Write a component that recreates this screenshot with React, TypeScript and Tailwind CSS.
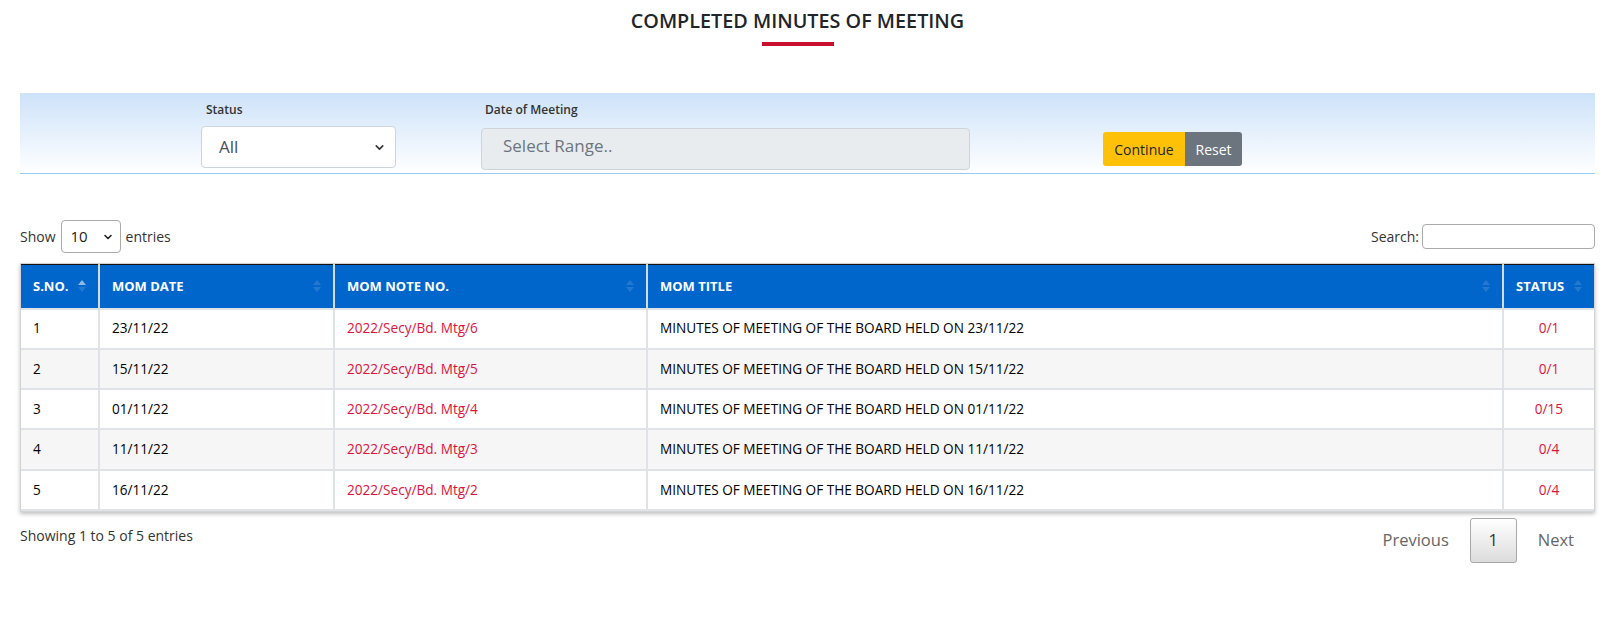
import { ChevronDown } from "lucide-react";

type MomRow = {
  no: number;
  date: string;
  note: string;
  title: string;
  status: string;
};

const rows: MomRow[] = [
  { no: 1, date: "23/11/22", note: "2022/Secy/Bd. Mtg/6", title: "MINUTES OF MEETING OF THE BOARD HELD ON 23/11/22", status: "0/1" },
  { no: 2, date: "15/11/22", note: "2022/Secy/Bd. Mtg/5", title: "MINUTES OF MEETING OF THE BOARD HELD ON 15/11/22", status: "0/1" },
  { no: 3, date: "01/11/22", note: "2022/Secy/Bd. Mtg/4", title: "MINUTES OF MEETING OF THE BOARD HELD ON 01/11/22", status: "0/15" },
  { no: 4, date: "11/11/22", note: "2022/Secy/Bd. Mtg/3", title: "MINUTES OF MEETING OF THE BOARD HELD ON 11/11/22", status: "0/4" },
  { no: 5, date: "16/11/22", note: "2022/Secy/Bd. Mtg/2", title: "MINUTES OF MEETING OF THE BOARD HELD ON 16/11/22", status: "0/4" },
];

const columns = [
  { label: "S.NO.", width: "w-[78px]", asc: true },
  { label: "MOM DATE", width: "w-[235px]" },
  { label: "MOM NOTE NO.", width: "w-[313px]" },
  { label: "MOM TITLE", width: "w-[856px]" },
  { label: "STATUS", width: "w-[91px]" },
];

function SortIcon({ asc }: { asc?: boolean }) {
  return (
    <span className="flex flex-col gap-[2px]">
      <svg width="8" height="5" viewBox="0 0 8 5">
        <path d="M4 0L8 5H0z" fill={asc ? "#8fbbea" : "#2677cf"} />
      </svg>
      <svg width="8" height="5" viewBox="0 0 8 5">
        <path d="M0 0H8L4 5z" fill="#2677cf" />
      </svg>
    </span>
  );
}

export default function App() {
  return (
    <main className="min-h-[617px] bg-white pl-[20px] pr-[12px] font-['Segoe_UI','Open_Sans',sans-serif] text-[#212529]">
      {/* title */}
      <div className="flex flex-col items-center pr-[20px] pt-[8px]">
        <h1 className="text-[19.8px] font-semibold leading-[26px] text-[#212529]">
          COMPLETED MINUTES OF MEETING
        </h1>
        <span className="mt-[8px] h-[4px] w-[72px] bg-[#c8102e]" />
      </div>

      {/* filters */}
      <section className="mt-[47px] flex h-[81px] items-start border-b border-[#98cbef] bg-gradient-to-b from-[#cde2f9] to-white pt-[8px]">
        <div className="ml-[181px] flex w-[195px] flex-col">
          <label className="pl-[5px] text-[12px] font-semibold leading-[17px] text-[#333]">Status</label>
          <div className="mt-[8px] flex h-[42px] items-center justify-between rounded-[4px] border border-[#ced4da] bg-white pl-[17px] pr-[9px] text-[17px] text-[#495057]">
            <span>All</span>
            <ChevronDown size={13} strokeWidth={3} className="text-[#333]" />
          </div>
        </div>

        <div className="ml-[85px] flex w-[489px] flex-col">
          <label className="pl-[4px] text-[12px] font-semibold leading-[17px] text-[#333]">Date of Meeting</label>
          <div className="mt-[10px] flex h-[42px] items-start rounded-[4px] border border-[#ced4da] bg-[#e9ecef] pl-[21px] pt-[5px] text-[17px] leading-[24px] text-[#6c757d]">
            Select Range..
          </div>
        </div>

        <div className="ml-[133px] mt-[31px] flex">
          <button type="button" className="h-[34px] w-[82px] rounded-l-[3px] bg-[#ffc107] text-[14px] text-[#212529]">
            Continue
          </button>
          <button type="button" className="h-[34px] w-[57px] rounded-r-[3px] bg-[#6c757d] text-[14px] text-white">
            Reset
          </button>
        </div>
      </section>

      {/* show / search */}
      <div className="mt-[46px] flex items-center justify-between text-[14px] text-[#333]">
        <div className="flex items-center gap-[5px]">
          <span>Show</span>
          <div className="flex h-[33px] w-[60px] items-center justify-between rounded-[4px] border border-[#aaa] bg-white pl-[9px] pr-[6px] text-[15px] text-[#222]">
            <span>10</span>
            <ChevronDown size={12} strokeWidth={3.2} className="text-[#222]" />
          </div>
          <span>entries</span>
        </div>
        <div className="flex items-center gap-[3px]">
          <span>Search:</span>
          <div className="h-[25px] w-[173px] rounded-[4px] border border-[#aaa] bg-white" />
        </div>
      </div>

      {/* table */}
      <div className="mt-[10px] w-[1575px] border border-[#d3d3d3] shadow-[0_2px_4px_rgba(0,0,0,0.25)]">
        <table className="w-full table-fixed border-collapse text-[13.6px]">
          <thead>
            <tr className="h-[44px] bg-[#0066cc] text-[13px] text-white">
              {columns.map((c) => (
                <th
                  key={c.label}
                  className={`${c.width} border-x-2 border-y border-x-[#d6dbe1] border-y-[#111] p-0 text-left font-bold first:border-l-0 last:border-r-0`}
                >
                  <div className="flex items-center justify-between pl-[12px] pr-[12px]">
                    <span>{c.label}</span>
                    <SortIcon asc={c.asc} />
                  </div>
                </th>
              ))}
            </tr>
          </thead>
          <tbody>
            {rows.map((r) => (
              <tr key={r.no} className="h-[40.3px] odd:bg-white even:bg-[#f6f6f6]">
                <td className="border-2 border-[#dfe2e6] border-l-0 pl-[12px] text-black">{r.no}</td>
                <td className="border-2 border-[#dfe2e6] pl-[12px] text-black">{r.date}</td>
                <td className="border-2 border-[#dfe2e6] pl-[12px] text-[#dc143c]">{r.note}</td>
                <td className="border-2 border-[#dfe2e6] pl-[12px] text-black">{r.title}</td>
                <td className="border-2 border-[#dfe2e6] border-r-0 text-center text-[#dc143c]">{r.status}</td>
              </tr>
            ))}
          </tbody>
        </table>
      </div>

      {/* footer */}
      <div className="flex items-start justify-between">
        <p className="mt-[13px] text-[14px] text-[#333]">Showing 1 to 5 of 5 entries</p>
        <div className="mr-[21px] mt-[6px] flex items-center text-[16.5px] text-[#666]">
          <span className="mr-[21px]">Previous</span>
          <span className="flex h-[45px] w-[47px] items-center justify-center rounded-[3px] border border-[#a8a8a8] bg-gradient-to-b from-white to-[#dcdcdc] text-[#333]">
            1
          </span>
          <span className="ml-[21px]">Next</span>
        </div>
      </div>
    </main>
  );
}
